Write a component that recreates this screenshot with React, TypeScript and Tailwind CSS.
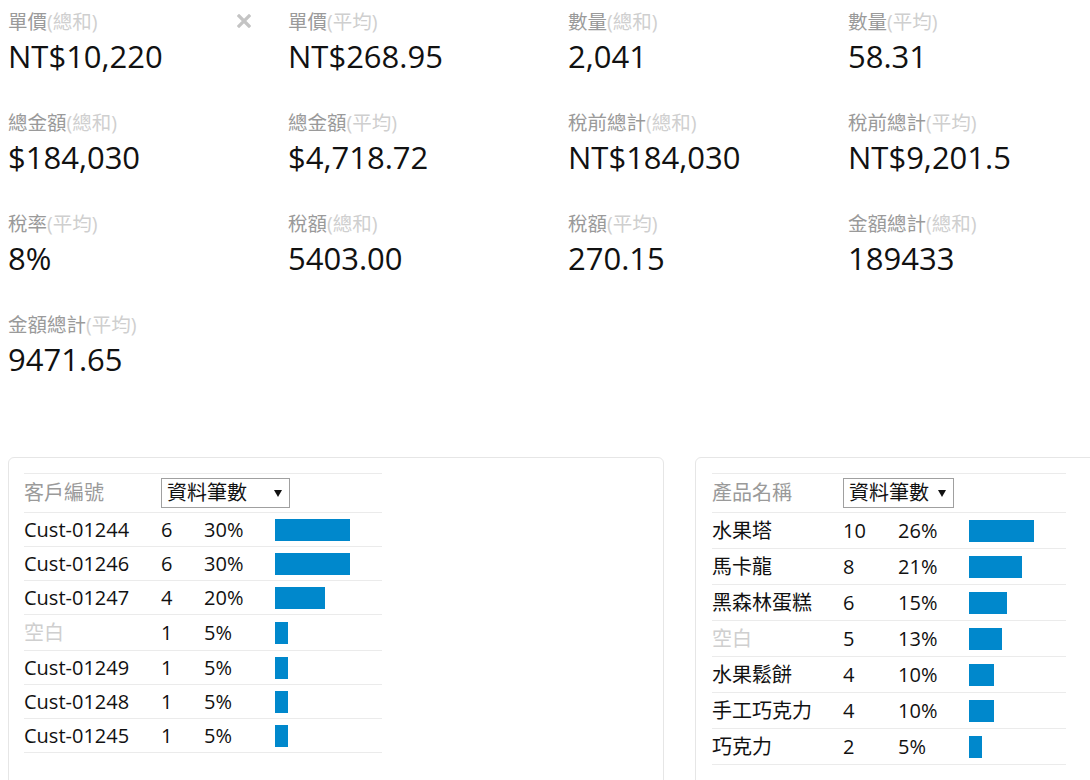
import React from "react";

const font = { fontFamily: '"Open Sans", "Noto Sans CJK TC", sans-serif' };

type Metric = { name: string; agg: string; value: string; close?: boolean };

const metrics: Metric[] = [
  { name: "單價", agg: "(總和)", value: "NT$10,220", close: true },
  { name: "單價", agg: "(平均)", value: "NT$268.95" },
  { name: "數量", agg: "(總和)", value: "2,041" },
  { name: "數量", agg: "(平均)", value: "58.31" },
  { name: "總金額", agg: "(總和)", value: "$184,030" },
  { name: "總金額", agg: "(平均)", value: "$4,718.72" },
  { name: "稅前總計", agg: "(總和)", value: "NT$184,030" },
  { name: "稅前總計", agg: "(平均)", value: "NT$9,201.5" },
  { name: "稅率", agg: "(平均)", value: "8%" },
  { name: "稅額", agg: "(總和)", value: "5403.00" },
  { name: "稅額", agg: "(平均)", value: "270.15" },
  { name: "金額總計", agg: "(總和)", value: "189433" },
  { name: "金額總計", agg: "(平均)", value: "9471.65" },
];

type Row = { name: string; count: number; pct: number; blank?: boolean; tall?: boolean };

const custRows: Row[] = [
  { name: "Cust-01244", count: 6, pct: 30 },
  { name: "Cust-01246", count: 6, pct: 30 },
  { name: "Cust-01247", count: 4, pct: 20 },
  { name: "空白", count: 1, pct: 5, blank: true, tall: true },
  { name: "Cust-01249", count: 1, pct: 5 },
  { name: "Cust-01248", count: 1, pct: 5 },
  { name: "Cust-01245", count: 1, pct: 5 },
];

const prodRows: Row[] = [
  { name: "水果塔", count: 10, pct: 26, tall: true },
  { name: "馬卡龍", count: 8, pct: 21, tall: true },
  { name: "黑森林蛋糕", count: 6, pct: 15, tall: true },
  { name: "空白", count: 5, pct: 13, blank: true, tall: true },
  { name: "水果鬆餅", count: 4, pct: 10, tall: true },
  { name: "手工巧克力", count: 4, pct: 10, tall: true },
  { name: "巧克力", count: 2, pct: 5, tall: true },
];

function MetricCell({ m }: { m: Metric }) {
  return (
    <div className="relative h-[101px]">
      <div className="text-[19.5px] leading-[26px] text-[#9a9a9a] whitespace-nowrap">
        {m.name}
        <span className="text-[#cfcfcf]">{m.agg}</span>
      </div>
      <div className="text-[31px] leading-[42px] text-[#111] whitespace-nowrap">{m.value}</div>
      {m.close && (
        <svg
          className="absolute left-[229px] top-[5px]"
          width="14"
          height="14"
          viewBox="0 0 14 14"
        >
          <path d="M2 2L12 12M12 2L2 12" stroke="#c4c4c4" strokeWidth="3.2" strokeLinecap="square" />
        </svg>
      )}
    </div>
  );
}

function Table({
  header,
  rows,
  w,
  selectW,
}: {
  header: string;
  rows: Row[];
  w: number[];
  selectW: string;
}) {
  return (
    <div className="border-t border-[#ebebeb] text-[20px]" style={{ width: w.reduce((a, b) => a + b, 0) }}>
      <div className="flex items-center h-[39px] border-b border-[#ebebeb]">
        <div className="text-[#9a9a9a] shrink-0" style={{ width: w[0] }}>
          {header}
        </div>
        <div
          className={`flex items-center justify-between h-[30px] border border-[#a0a0a0] pl-[5px] pr-[7px] text-[#111] ${selectW}`}
        >
          <span className="leading-[28px]">資料筆數</span>
          <svg width="8" height="7" viewBox="0 0 8 7">
            <path d="M0 0H8L4 7Z" fill="#111" />
          </svg>
        </div>
      </div>
      {rows.map((r, i) => (
        <div
          key={i}
          className={`flex items-center border-b border-[#ebebeb] ${r.tall ? "h-[36px]" : "h-[34px]"}`}
        >
          <div
            className={`shrink-0 whitespace-nowrap ${r.blank ? "text-[#cfcfcf]" : "text-[#111]"}`}
            style={{ width: w[0] }}
          >
            {r.name}
          </div>
          <div className="shrink-0 text-[#111]" style={{ width: w[1] }}>
            {r.count}
          </div>
          <div className="shrink-0 text-[#111]" style={{ width: w[2] }}>
            {r.pct}%
          </div>
          <div className="shrink-0" style={{ width: w[3] }}>
            <div className="h-[22px] bg-[#0088cc]" style={{ width: Math.round(r.pct * 2.5) }} />
          </div>
        </div>
      ))}
    </div>
  );
}

export default function App() {
  return (
    <div className="w-full h-[780px] overflow-hidden bg-white" style={font}>
      <div className="pl-[8px] pt-[9px]">
        <div className="grid grid-cols-[repeat(4,280px)]">
          {metrics.map((m, i) => (
            <MetricCell key={i} m={m} />
          ))}
        </div>
        <div className="flex gap-[31px] mt-[44px]">
          <div className="shrink-0 w-[656px] h-[360px] border border-[#e6e6e6] rounded-[6px] pt-[15px] pl-[15px]">
            <Table header="客戶編號" rows={custRows} w={[137, 43, 71, 107]} selectW="w-[129px]" />
          </div>
          <div className="shrink-0 w-[656px] h-[360px] border border-[#e6e6e6] rounded-[6px] pt-[15px] pl-[16px]">
            <Table header="產品名稱" rows={prodRows} w={[131, 55, 71, 97]} selectW="w-[111px]" />
          </div>
        </div>
      </div>
    </div>
  );
}
